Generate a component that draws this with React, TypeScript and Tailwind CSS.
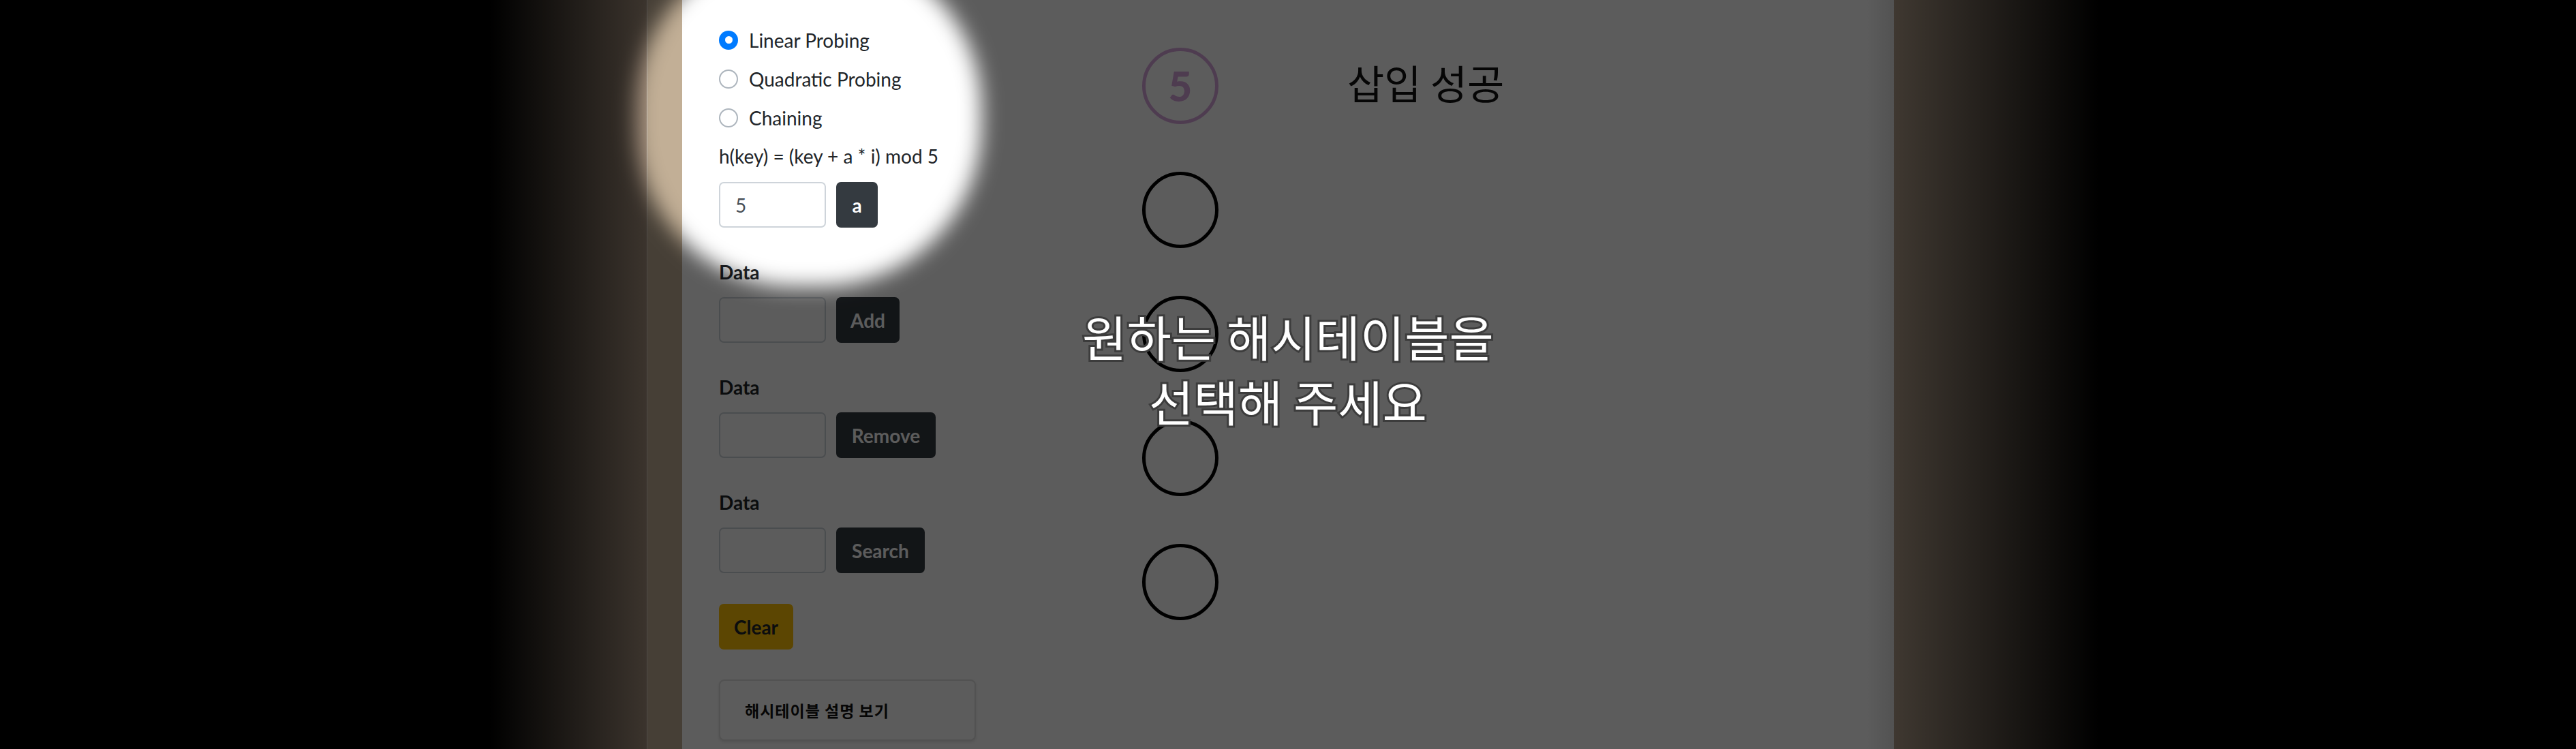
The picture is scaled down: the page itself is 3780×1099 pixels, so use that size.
import React from "react";

const KR = "[font-family:'Noto_Sans_CJK_KR','Noto_Sans_CJK_SC',sans-serif]";

function Radio({ checked, label }: { checked?: boolean; label: string }) {
  return (
    <div className="flex items-center h-[57px] gap-[16px]">
      {checked ? (
        <span className="w-[28px] h-[28px] rounded-full bg-[#007bff] flex items-center justify-center shrink-0">
          <span className="w-[11px] h-[11px] rounded-full bg-white" />
        </span>
      ) : (
        <span className="w-[28px] h-[28px] rounded-full border-2 border-[#adb5bd] bg-white shrink-0" />
      )}
      <span className="text-[28px] leading-none text-[#212529]">{label}</span>
    </div>
  );
}

function DataGroup({ action, width }: { action: string; width: string }) {
  return (
    <div className="flex flex-col">
      <div className="h-[40px] leading-[40px] text-[28px] font-bold text-[#212529]">Data</div>
      <div className="mt-[17px] flex gap-[15px]">
        <input
          readOnly
          className="w-[157px] h-[67px] border-2 border-[#ced4da] rounded-[7px] bg-white outline-none"
        />
        <button
          className={`${width} h-[67px] rounded-[7px] bg-[#343a40] text-white text-[28px] font-bold flex items-center justify-center`}
        >
          {action}
        </button>
      </div>
    </div>
  );
}

export default function App() {
  return (
    <div className="relative w-[3780px] h-[1099px] overflow-hidden bg-black flex [font-family:Lato,sans-serif]">
      <div className="w-[716px] shrink-0 bg-black" />
      <div className="w-[233px] shrink-0 bg-[linear-gradient(to_right,#000000,#a4907d)]" />
      <div className="w-px shrink-0 bg-[#d6cfc6]" />
      <div className="w-[51px] shrink-0 bg-[#c2af96]" />

      <main className="w-[1778px] shrink-0 bg-white flex">
        <section className="w-[675px] shrink-0 pl-[54px] pt-[30px] flex flex-col">
          <Radio checked label="Linear Probing" />
          <Radio label="Quadratic Probing" />
          <Radio label="Chaining" />
          <div className="h-[56px] flex items-center text-[28px] text-[#212529]">
            h(key) = (key + a * i) mod 5
          </div>
          <div className="mt-[10px] flex gap-[15px]">
            <input
              readOnly
              value="5"
              className="w-[157px] h-[67px] border-2 border-[#ced4da] rounded-[7px] bg-white pl-[22px] text-[28px] text-[#495057] outline-none"
            />
            <button className="w-[61px] h-[67px] rounded-[7px] bg-[#343a40] text-white text-[28px] font-bold flex items-center justify-center">
              a
            </button>
          </div>
          <div className="mt-[45px] flex flex-col gap-[45px]">
            <DataGroup action="Add" width="w-[93px]" />
            <DataGroup action="Remove" width="w-[146px]" />
            <DataGroup action="Search" width="w-[130px]" />
          </div>
          <button className="mt-[45px] w-[109px] h-[67px] rounded-[7px] bg-[#ffc107] text-[#212529] text-[28px] font-bold flex items-center justify-center">
            Clear
          </button>
          <button
            className={`mt-[44px] w-[377px] h-[90px] shrink-0 border-2 border-[#e2e2e2] rounded-[8px] bg-white shadow-[0_2px_4px_rgba(0,0,0,0.12)] pl-[36px] text-left text-[23px] font-bold tracking-[1px] text-[#111] ${KR}`}
          >
            해시테이블 설명 보기
          </button>
        </section>

        <section className="w-[112px] shrink-0 pt-[70px] flex flex-col gap-[70px]">
          <div className="w-[112px] h-[112px] rounded-full border-[5px] border-[#d9a6dd] flex items-center justify-center">
            <span className="text-[60px] font-black leading-none text-[#d9a6dd]">5</span>
          </div>
          <div className="w-[112px] h-[112px] rounded-full border-[5px] border-black" />
          <div className="w-[112px] h-[112px] rounded-full border-[5px] border-black" />
          <div className="w-[112px] h-[112px] rounded-full border-[5px] border-black" />
          <div className="w-[112px] h-[112px] rounded-full border-[5px] border-black" />
        </section>

        <section className="ml-[189px] pt-[86px]">
          <div className={`text-[59px] leading-[70px] text-[#111] ${KR}`}>삽입 성공</div>
        </section>

        <div className="ml-auto w-[40px] shrink-0 bg-[linear-gradient(to_right,#ffffff,#e4e4e4)]" />
      </main>

      <div className="w-[303px] shrink-0 bg-[linear-gradient(to_right,#af9c88,#000000)]" />
      <div className="flex-1 bg-black" />

      {/* spotlight overlay */}
      <div className="absolute left-[932px] top-[-76px] w-[508px] h-[496px] rounded-[235px] shadow-[0_0_0_5000px_rgba(0,0,0,0.64)] blur-[15px] pointer-events-none" />

      <div className="absolute inset-0 flex items-center justify-center pb-[20px] pointer-events-none">
        <p
          className={`text-center text-white text-[71px] leading-[95px] font-normal [-webkit-text-stroke:6px_#3c3c3c] [paint-order:stroke_fill] ${KR}`}
        >
          원하는 해시테이블을
          <br />
          선택해 주세요
        </p>
      </div>
    </div>
  );
}
